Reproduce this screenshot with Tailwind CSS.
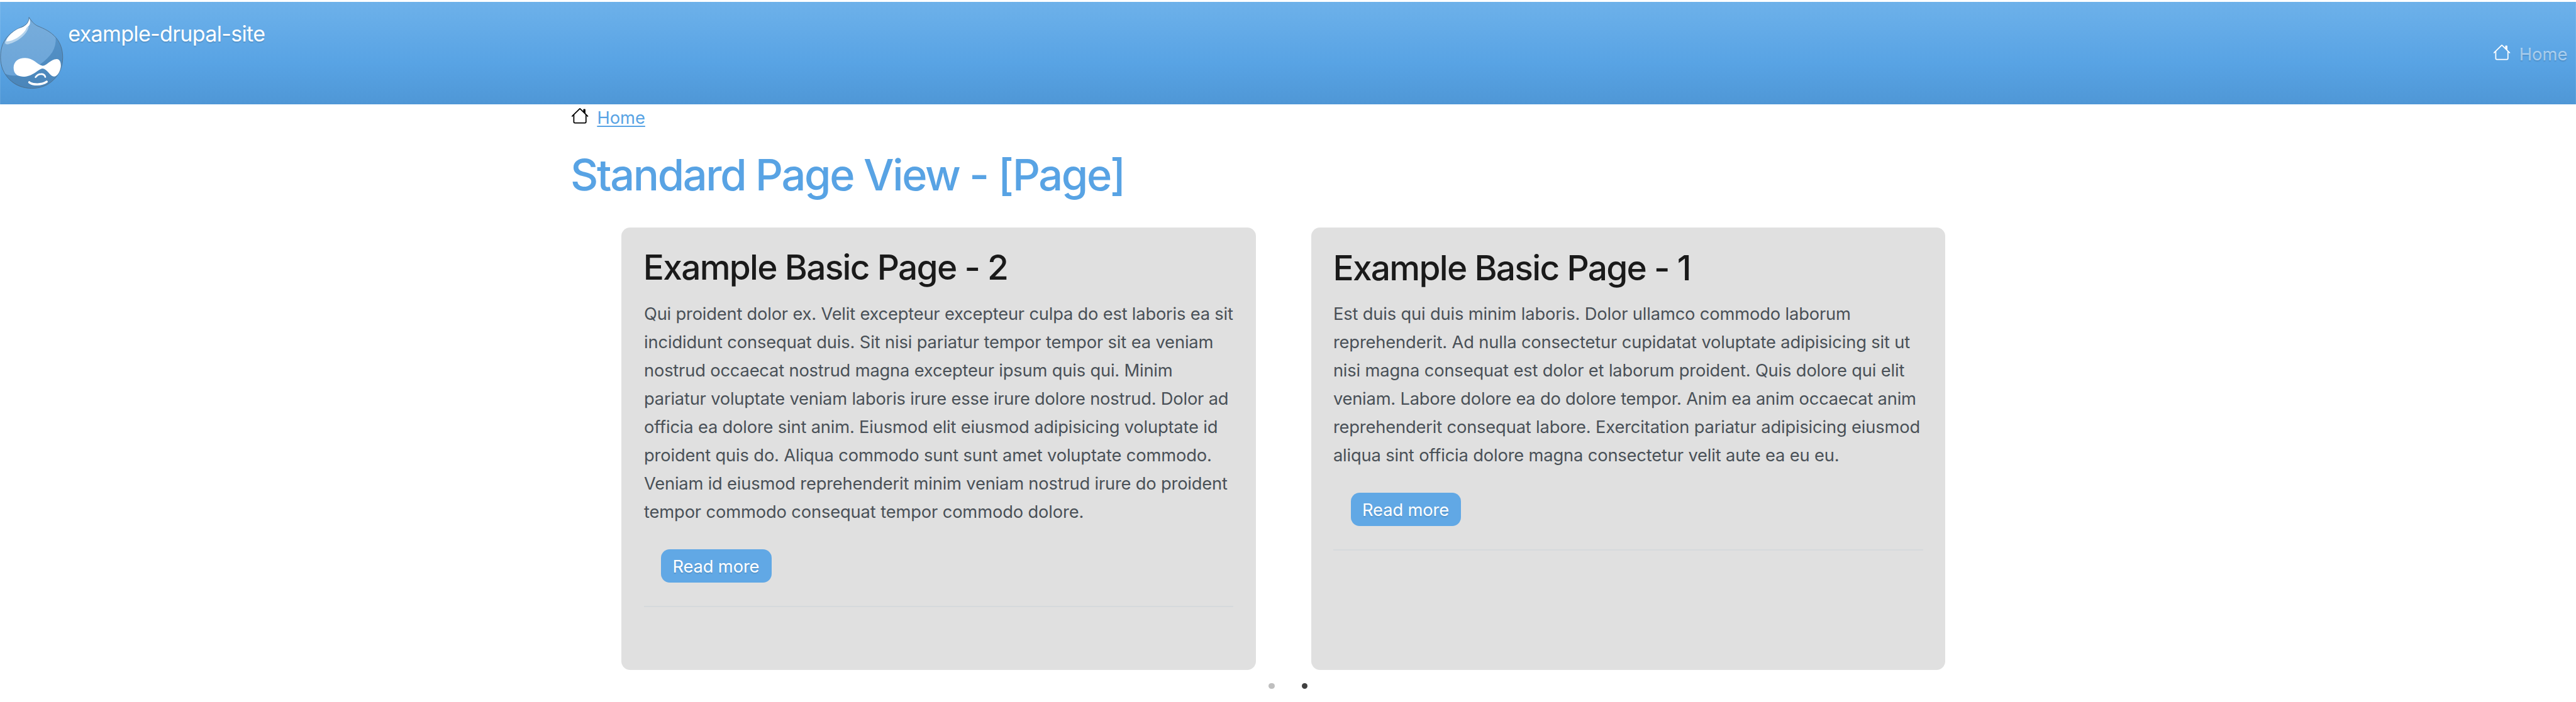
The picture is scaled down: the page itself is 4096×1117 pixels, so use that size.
<!DOCTYPE html>
<html lang="en">
<head>
<meta charset="utf-8">
<title>example-drupal-site</title>
<script src="https://cdn.jsdelivr.net/npm/@tailwindcss/browser@4"></script>
</head>
<body class="h-[1117px] overflow-hidden bg-white pt-[3.2px] font-[Inter,sans-serif] text-[27.3px] leading-[45.056px] text-[#495057]">
<svg class="hidden">
  <symbol id="house" viewBox="0 0 16 16">
    <path fill-rule="evenodd" d="M2 13.5V7h1v6.5a.5.5 0 0 0 .5.5h9a.5.5 0 0 0 .5-.5V7h1v6.5a1.5 1.5 0 0 1-1.5 1.5h-9A1.5 1.5 0 0 1 2 13.5zm11-11V6l-2-2V2.5a.5.5 0 0 1 .5-.5h1a.5.5 0 0 1 .5.5z"/>
    <path fill-rule="evenodd" d="M7.293 1.5a1 1 0 0 1 1.414 0l6.647 6.646a.5.5 0 0 1-.708.708L8 2.207 1.354 8.854a.5.5 0 1 1-.708-.708L7.293 1.5z"/>
  </symbol>
</svg>

<header class="flex h-[162.4px] items-start justify-between border-x border-white/10 bg-linear-to-b from-[#6db1ea] via-[#58a3e4] via-60% to-[#4f97d6] [text-shadow:0_1.6px_1.6px_rgba(0,0,0,.12)]">
  <a class="flex items-start text-white">
    <svg class="-ml-px mt-[24.3px] h-[114.7px] w-[100.8px] shrink-0" viewBox="0 43 378 430">
      <defs>
        <linearGradient id="light" x1="0" y1="0" x2="0" y2="1"><stop offset="0" stop-color="#78addb"/><stop offset="1" stop-color="#68a3d8"/></linearGradient>
        <linearGradient id="dark" x1="0" y1="0" x2="0" y2="1"><stop offset="0" stop-color="#5492c8"/><stop offset="1" stop-color="#4a85b9"/></linearGradient>
      </defs>
      <path fill="url(#light)" d="M173 45C190 70 200 84 225 97C262 112 303 130 335 168C362 200 374 240 374 285C374 390 295 469 190 469C85 469 3 390 3 285C3 225 20 180 60 145C85 124 100 116 125 105C160 90 172 75 173 45Z"/>
      <path fill="url(#dark)" d="M332 165C337 230 305 280 237 327L150 385C120 396 60 396 30 381C60 440 120 469 190 469C295 469 374 390 374 285C374 240 362 200 332 165Z"/>
      <path fill="none" stroke="#4b6a83" stroke-width="3" d="M173 45C190 70 200 84 225 97C262 112 303 130 335 168C362 200 374 240 374 285C374 390 295 469 190 469C85 469 3 390 3 285C3 225 20 180 60 145C85 124 100 116 125 105C160 90 172 75 173 45Z"/>
      <path fill="#b3d2ec" d="M31 188C27 203 34 209 52 205C105 190 160 150 171 103L160 100L60 160Z"/>
      <path fill="#fff" d="M38 188C32 178 75 120 128 107C160 92 170 76 175 52C183 72 182 90 164 103C157 105 158 112 152 122C125 160 72 192 38 188Z"/>
      <path fill="#fff" d="M150 288C200 288 222 328 252 334C280 336 300 294 338 294C358 295 363 315 363 335C360 370 340 398 322 398C300 398 280 352 255 350C230 350 200 398 138 399C100 398 81 380 81 345C82 310 108 288 150 288Z"/>
      <path fill="none" stroke="#fff" stroke-width="10" stroke-linecap="round" d="M212 402Q226 384 244 384Q266 383 270 401"/>
      <path fill="#fff" d="M169 430C171 424 177 425 181 430C207 442 250 442 275 424C282 420 287 427 284 433C255 456 200 458 174 440C168 437 167 434 169 430Z"/>
    </svg>
    <span class="ml-[7.5px] mt-[26px] text-[34px] leading-[50px] tracking-[-0.66px] whitespace-nowrap">example-drupal-site</span>
  </a>
  <nav class="mr-[12.7px] mt-[61px] flex items-start">
    <svg class="mt-[4.4px] size-[28.2px] fill-white"><use href="#house"/></svg>
    <a class="ml-[13.4px] text-white/50">Home</a>
  </nav>
</header>

<main class="ml-[907px] w-[2282px]">
  <nav class="flex items-start">
    <svg class="ml-[1px] mt-[4.2px] size-[28.2px] fill-black"><use href="#house"/></svg>
    <a class="ml-[13.2px] mt-[-1px] text-[#58a3e4] underline decoration-2 underline-offset-[3px]">Home</a>
  </nav>
  <h1 class="mt-[27.7px] text-[68.6px] leading-[84px] font-medium tracking-[-2.372px] text-[#58a3e4]">Standard Page View - [Page]</h1>

  <section class="ml-[81px] mt-[41px] flex gap-[87.7px] whitespace-nowrap">
    <article class="h-[704px] w-[1009.2px] shrink-0 rounded-[14px] bg-[#e0e0e0] px-[36px] pt-[29.4px]">
      <h2 class="-ml-[1.2px] text-[55px] leading-[66px] font-medium tracking-[-1.717px] text-[#1a1a1a]">Example Basic Page - 2</h2>
      <p class="mt-[19px]">
        <span class="block tracking-[-0.198px]">Qui proident dolor ex. Velit excepteur excepteur culpa do est laboris ea sit</span>
        <span class="block tracking-[-0.137px]">incididunt consequat duis. Sit nisi pariatur tempor tempor sit ea veniam</span>
        <span class="block tracking-[-0.18px]">nostrud occaecat nostrud magna excepteur ipsum quis qui. Minim</span>
        <span class="block tracking-[-0.2px]">pariatur voluptate veniam laboris irure esse irure dolore nostrud. Dolor ad</span>
        <span class="block tracking-[-0.178px]">officia ea dolore sint anim. Eiusmod elit eiusmod adipisicing voluptate id</span>
        <span class="block tracking-[-0.15px]">proident quis do. Aliqua commodo sunt sunt amet voluptate commodo.</span>
        <span class="block tracking-[-0.19px]">Veniam id eiusmod reprehenderit minim veniam nostrud irure do proident</span>
        <span class="block tracking-[-0.14px]">tempor commodo consequat tempor commodo dolore.</span>
      </p>
      <a class="ml-[27.1px] mt-[36.5px] block h-[53.6px] w-[175.6px] rounded-[14px] bg-[#61a8e5] pl-[18.3px] pt-[5.4px] tracking-[-0.12px] text-white [text-shadow:0_1.6px_1.6px_rgba(0,0,0,.12)]">Read more</a>
      <hr class="mt-[36.7px] border-t-2 border-[#d5d9dc]">
    </article>
    <article class="h-[704px] w-[1007.8px] shrink-0 rounded-[14px] bg-[#e0e0e0] px-[35px] pt-[29.4px]">
      <h2 class="-ml-[0.4px] pt-[0.8px] text-[55px] leading-[66px] font-medium tracking-[-1.717px] text-[#1a1a1a]">Example Basic Page - 1</h2>
      <p class="mt-[18.2px]">
        <span class="block tracking-[-0.15px]">Est duis qui duis minim laboris. Dolor ullamco commodo laborum</span>
        <span class="block tracking-[-0.145px]">reprehenderit. Ad nulla consectetur cupidatat voluptate adipisicing sit ut</span>
        <span class="block tracking-[-0.153px]">nisi magna consequat est dolor et laborum proident. Quis dolore qui elit</span>
        <span class="block tracking-[-0.203px]">veniam. Labore dolore ea do dolore tempor. Anim ea anim occaecat anim</span>
        <span class="block tracking-[-0.163px]">reprehenderit consequat labore. Exercitation pariatur adipisicing eiusmod</span>
        <span class="block tracking-[-0.158px]">aliqua sint officia dolore magna consectetur velit aute ea eu eu.</span>
      </p>
      <a class="ml-[27.9px] mt-[36.5px] block h-[53.6px] w-[175.6px] rounded-[14px] bg-[#61a8e5] pl-[18.3px] pt-[5.4px] tracking-[-0.12px] text-white [text-shadow:0_1.6px_1.6px_rgba(0,0,0,.12)]">Read more</a>
      <hr class="mt-[36.7px] border-t-2 border-[#d5d9dc]">
    </article>
  </section>
  <div class="mt-[20.4px] flex justify-center gap-[43px]">
    <span class="size-[9.4px] rounded-full bg-[#bfbfbf]"></span>
    <span class="size-[9.4px] rounded-full bg-[#404040]"></span>
  </div>
</main>
</body>
</html>
